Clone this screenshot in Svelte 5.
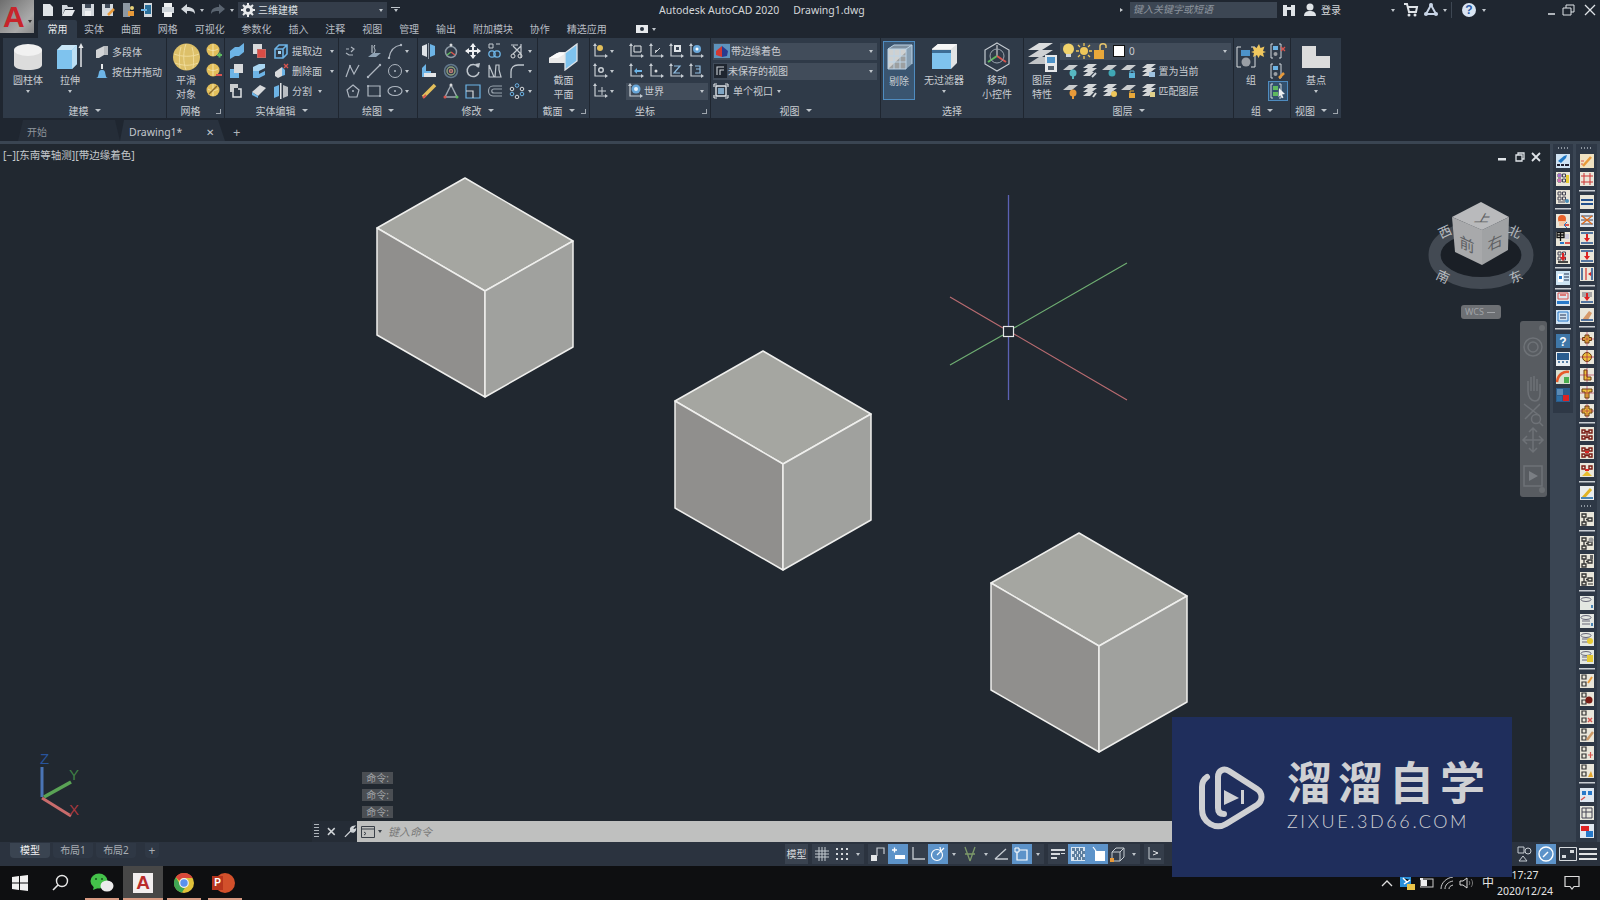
<script>
  const sv = (w, h, b) => `<svg width="${w}" height="${h}" viewBox="0 0 ${w} ${h}" style="display:block">${b}</svg>`;
  const st = (d, c = '#aeb6c0', w = 1) => `<path d="${d}" fill="none" stroke="${c}" stroke-width="${w}"/>`;
  const fl = (d, c) => `<path d="${d}" fill="${c}"/>`;
  const rc = (x, y, w, h, c) => `<rect x="${x}" y="${y}" width="${w}" height="${h}" fill="${c}"/>`;
  const ci = (x, y, r, c) => `<circle cx="${x}" cy="${y}" r="${r}" fill="${c}"/>`;
  const ro = (x, y, r, c = '#aeb6c0', w = 1) => `<circle cx="${x}" cy="${y}" r="${r}" fill="none" stroke="${c}" stroke-width="${w}"/>`;
  const B = '#6db4e6', BL = '#a9d6f2', G = '#d8dadc', Y = '#e3bf5b', R = '#d8554f', N = '#5fb85f', L = '#aeb6c0', O = '#e89a3a';
  const s16 = (b) => sv(16, 16, b);

  const q = {
    file: s16(fl('M3 2h7l3 3v9H3z', '#dfe3e7')),
    open: s16(fl('M2 3h5l1 2h5v2H5l-3 7z', '#cfd5db') + fl('M5 8h10l-3 6H2z', '#e6e9ec')),
    save: s16(rc(2, 2, 12, 12, '#d4d9de') + rc(5, 2, 6, 4, '#414c5a') + rc(5, 9, 6, 5, '#eef0f2')),
    saveas: s16(rc(2, 2, 11, 12, '#d4d9de') + rc(5, 2, 5, 4, '#414c5a') + st('M8 13l6-6', O, 2.5)),
    web: s16(rc(3, 1, 7, 14, '#8d98a3') + rc(8, 9, 6, 5, O) + ci(12, 6, 2, '#e8d17a')),
    mob: s16(rc(4, 1, 8, 14, '#d4d9de') + rc(5, 3, 6, 9, '#2a6f9a') + st('M1 8h6', B, 2)),
    plot: s16(rc(4, 1, 8, 4, '#eef0f2') + rc(2, 5, 12, 6, '#cfd5db') + rc(4, 10, 8, 5, '#f3f4f5')),
    undo: s16(fl('M1 7l6-5v3c5 0 8 2 8 7-2-3-4-3-8-3v3z', '#d4d9de')),
    redo: s16(fl('M15 7l-6-5v3c-5 0-8 2-8 7 2-3 4-3 8-3v3z', '#5a6470')),
    gear: s16(ro(8, 8, 3.6, '#e8eaec', 3) + st('M8 1v3M8 12v3M1 8h3M12 8h3M3 3l2 2M11 11l2 2M13 3l-2 2M5 11l-2 2', '#e8eaec', 2)),
    binoc: s16(rc(2, 3, 4, 11, '#dfe3e7') + rc(10, 3, 4, 11, '#dfe3e7') + rc(6, 5, 4, 3, '#dfe3e7')),
    user: s16(ci(8, 5, 3.5, '#dfe3e7') + fl('M2 14c0-4 3-5 6-5s6 1 6 5z', '#dfe3e7')),
    cart: s16(st('M1 2h3l2 8h7l1-5H5', '#dfe3e7', 2) + ci(6, 13, 1.5, '#dfe3e7') + ci(12, 13, 1.5, '#dfe3e7')),
    tri: s16(st('M8 3l5 9H3z', '#c8d4e6', 2) + ci(8, 3, 2, '#c8d4e6') + ci(3, 12, 2, '#c8d4e6') + ci(13, 12, 2, '#c8d4e6')),
    cam: s16(rc(2, 4, 12, 8, '#e6e9ec') + ci(8, 8, 2, '#2a3340'))
  };

  const cyl = sv(30, 28, fl('M1 7v15c0 3 6 5 14 5s14-2 14-5V7z', '#dcdcdc') + `<ellipse cx="15" cy="7" rx="14" ry="6" fill="#f1f1f1"/>`);
  const ext = sv(28, 28, fl('M1 7l5-5h15v19l-5 5H1z', '#7fc3ee') + fl('M1 7l5-5h15l-5 5z', '#c9e6f7') + fl('M16 7l5-5v19l-5 5z', '#bcdff4') + st('M25 24V3', '#e4e6e8', 1.5) + fl('M25 0l2.5 5h-5z', '#e4e6e8'));
  const sphere = sv(29, 28, `<circle cx="14.5" cy="14" r="13.5" fill="#ddc069"/>` + st('M2 11c8 3 18 3 25 0M3 20c8 3 16 3 23 0M14 1c-3 8-3 18 0 26M9 4c-2 6-2 14-1 21M20 4c2 6 2 14 1 21', '#f0dc9a', 1));
  const sect = sv(30, 28, fl('M0 15l10-6h8v11H0z', '#e9e9e9') + fl('M0 15l8-5h9l-8 5z', '#fafafa') + fl('M16 10L28 1v17l-12 9z', '#7fc3ee') + st('M16 10L28 1v17l-12 9z', '#dfe3e7', 1.3));
  const culling = sv(28, 28, rc(3, 5, 18, 20, '#cfd1d1') + fl('M3 25L21 8v17z', '#9da0a1') + fl('M3 5l6-4h18l-6 4z', '#7d8f9f') + fl('M21 5l6-4v19l-6 5z', '#88a0b4') + st('M3 5h18v20H3zM3 12h18M3 18h18M9 5v20M15 5v20M21 5l6-4M3 5l6-4h18v19', '#bcd3e6', 1));
  const nofilter = sv(28, 28, fl('M2 6l6-5h19v19l-6 6H2z', '#e1e3e4') + fl('M2 6l6-5h19l-6 5z', '#f6f6f6') + rc(2, 9, 19, 17, '#7fc3ee') + rc(2, 7, 19, 3, '#3d6d95'));
  const gizmo = sv(28, 30, st('M14 1L26 8v14l-12 7L2 22V8z', '#c4cad0', 1.2) + st('M14 3v11', '#8c9199', 2) + st('M14 14L5 20', N, 2) + st('M14 14l9 6', R, 2) + ro(14, 14, 7, '#9aa4ae', 1));
  const layerB = sv(30, 30, fl('M1 8L12 1h14L15 8z', '#dadcdd') + fl('M1 15L12 8h14L15 15z', '#cfd1d3') + fl('M1 22l11-7h6v7z', '#c1c4c7') + rc(18, 13, 12, 17, '#e6e8ea') + rc(20, 15, 8, 6, '#4d93c9') + rc(21, 24, 6, 4, '#52606e'));
  const group = sv(30, 26, st('M5 3H1v20h4M15 3h4v20h-4', '#d9dcdf', 1) + rc(5, 6, 9, 6, '#4d93c9') + ci(10, 18, 4.5, '#9a9fa5') + fl('M23 0l1.5 4 4-1.5L27 7l3 1-3 1 1 4-4-2-1.500 3-1.500-3-4 2 1-4-3-1 3-1-1.500-4.500 4 1.500z', '#f0c75e'));
  const base = sv(28, 22, fl('M0 0h14v10h14v12H0z', '#dcdcdc'));
  const poly = s16(fl('M2 6l8-4v9l-5 3H2z', '#d2d4d6') + fl('M10 2h4v9h-4z', '#b8bbbe'));
  const press = s16(fl('M1 14c3 0 3-1 4-6 1-3 5-3 6 0 1 5 1 6 4 6z', B) + rc(7, 0, 2, 5, '#e6e8ea'));
  const meshp = (x) => s16(ci(7, 7, 6.5, Y) + st('M2 6c3 2 7 2 10 0M7 1v12', '#f2e2a8') + x);
  const un = s16(fl('M1 8l5-4h4l5-4v9l-5 4H6l-5 3z', B));
  const sub = s16(rc(2, 1, 9, 10, G) + rc(6, 6, 9, 9, '#c66b66') + rc(7, 7, 7, 7, '#d94c46'));
  const wire = s16(st('M2 6l4-4h8v9l-4 4H2zM2 6h8v9M10 6l4-4', B, 1.6) + rc(5, 8, 3, 3, BL));
  const inter = s16(rc(1, 6, 9, 9, B) + rc(5, 1, 9, 9, G));
  const slab = s16(fl('M2 4l6-3h6v4l-6 3H2z', BL) + fl('M2 8h6v3l6-3v4l-6 3H2z', B));
  const delf = s16(fl('M2 9l7-5v9l-4 2-3-2z', G) + fl('M9 4l3 3v5l-3 1z', B) + st('M11 1l4 4M15 1l-4 4', R, 1.4));
  const box = s16(st('M4 6h8v8H4z', '#e0e2e4', 1.5) + rc(1, 1, 8, 8, '#c9ccce') + rc(5, 5, 4, 4, '#303a46'));
  const slp = s16(fl('M1 9l8-7 6 3-8 8z', G) + fl('M1 9l6 4v2l-6-3z', B));
  const split = s16(fl('M1 4l5-2v11l-5 2z', B) + rc(7, 0, 1.500, 16, '#e0e2e4') + fl('M10 2l5 2v9l-5 2z', '#b9bec3'));
  const d = (p, extra = '') => s16(st(p, L, 1.2) + extra);
  const line1 = d('M1 6h3M6 4l3 2-3 3M1 10l3 2h4', ci(12, 7, 0, L));
  const helix = s16(fl('M2 14l5-4h8l-5 4z', '#8fa3b5') + st('M6 2v8M9 2c-3 3 2 4-1 8', '#c9d1d9'));
  const arcI = d('M2 15C3 8 7 3 14 2', ci(2, 15, 1.200, L) + ci(14, 2, 1.200, L));
  const pline = d('M1 14l4-11 4 8 5-9', ci(5, 3, 1, L));
  const lineI = d('M2 14L14 2', ci(2, 14, 1.200, L) + ci(14, 2, 1.200, L));
  const circ = d('', ro(8, 8, 6.500) + ci(8, 8, 1, L));
  const pent = d('M8 2l6 5-2 7H4L2 7z', ci(8, 8, 1, L));
  const rect = d('M2 3h12v10H2z', ci(2, 3, 1, L) + ci(14, 13, 1, L));
  const ell = s16(`<ellipse cx="8" cy="8" rx="7" ry="4.500" fill="none" stroke="${L}" stroke-width="1.200"/>` + ci(8, 8, 1, L));
  const mir = s16(fl('M1 3l5-2v13l-5-2z', '#dfe3e7') + fl('M9 1l5 2v9l-5 2z', B) + rc(7, 0, 1, 16, '#8b95a0'));
  const rot3 = s16(ro(8, 9, 5.500, '#8e9aa6', 1.500) + st('M8 9L4 12', N, 1.500) + st('M8 9l4 3', R, 1.500) + ci(8, 2, 1.500, G));
  const mov = s16(st('M8 1v14M1 8h14', '#eef0f2', 2) + fl('M8 0l3 4H5zM8 16l3-4H5zM0 8l4-3v6zM16 8l-4-3v6z', '#eef0f2'));
  const arr = s16(st('M2 1h4v4H2zM9 1h4', '#c4cad0') + ro(5, 11, 3.200, B, 1.300) + ro(10, 11, 3.200, B, 1.300));
  const scis = s16(st('M2 2h7M12 1v14M4 3l8 8M12 3l-8 8', '#c4cad0', 1.200) + ro(4, 13, 2, G) + ro(11, 13, 2, G));
  const strch = s16(fl('M1 14V5l4-4v7h5v6z', B) + rc(3, 10, 12, 4, '#e3e5e7'));
  const array = s16(ro(8, 8, 6.500, '#62798d', 1.500) + ro(8, 8, 4, '#8a9e7c', 1.500) + ro(8, 8, 1.500, '#c07a74', 1.500));
  const rot = s16(st('M13 4a6 6 0 1 0 1 5', '#bfc6cd', 1.500) + fl('M10 1l4 4 1-5z', '#bfc6cd'));
  const scale = s16(st('M2 2v12h5zM9 2h3v5l2 7H8z', '#bfc6cd', 1.200));
  const fil = s16(st('M2 15V9c0-5 3-7 7-7h6', '#bfc6cd', 1.300));
  const erase = s16(st('M2 14L14 2', Y, 3.500) + st('M2 15l3-3', R, 2));
  const cpy = s16(st('M8 2L2 14h12z', '#9aa4ae', 1.500) + ci(8, 2, 1.500, G) + ci(2, 14, 1.500, R) + ci(14, 14, 1.500, N));
  const sq = s16(st('M1 2h14v13H1z', B, 1.200) + st('M1 8h7v7', G, 1.200));
  const off = s16(st('M15 3H6c-6 0-6 10 0 10h9M15 6H7c-3 0-3 4 0 4h8', '#9aa4ae', 1.200));
  const rarr = s16(ro(8, 2.500, 1.800, B, 1) + ro(13, 6, 1.800, G, 1) + ro(3, 6, 1.800, G, 1) + ro(13, 11, 1.800, B, 1) + ro(3, 11, 1.800, B, 1) + ro(8, 14, 1.800, G, 1));
  const ucsBase = (x) => s16(st('M3 2v11h11', '#c8ced4', 1.200) + fl('M3 0l2 3H1zM16 13l-3 2v-4z', '#c8ced4') + x);
  const ucs = {
    u1: ucsBase(ci(8, 5, 3, Y)),
    u2: ucsBase(st('M6 3h7v6H6z', '#e6e8ea')),
    u3: ucsBase(st('M7 10l5-5', '#c8ced4') + ci(8, 8, 1, G)),
    u4: ucsBase(rc(6, 2, 7, 7, '#dfe3e7') + rc(8, 4, 3, 3, '#3b4553')),
    u5: ucsBase(ci(9, 6, 4, '#68a6d8') + ci(9, 6, 1.500, '#fff')),
    u6: ucsBase(ci(9, 7, 3, '#c8ced4') + ci(9, 7, 1.500, '#2f3a48')),
    u7: ucsBase(fl('M7 7h7v2H7z', B) + fl('M6 8l3-3v6z', B)),
    u8: ucsBase(ci(8, 8, 1.500, G)),
    u10: ucsBase(st('M6 3h6L6 10h6', '#8fbce0', 1.200)),
    u11: ucsBase(st('M7 3h5v3H8h4v4H7', '#8fbce0', 1.200)),
    u12: ucsBase(st('M6 8h8M10 4v8', '#c8ced4')),
    world: ucsBase(ci(9, 6, 4.500, '#68a6d8') + ci(9, 6, 2, '#e8f2fa'))
  };
  const vstyle = sv(16, 14, rc(0, 0, 16, 14, '#5e93bd') + fl('M2 7l6-5v11l-6-2z', '#d43831') + fl('M8 2l6 5-1 5-5 1z', '#2a3b8e'));
  const vport = sv(16, 16, st('M3 3h10v10H3z', '#dfe3e7', 1.400) + rc(5, 5, 6, 6, '#7ea5c4') + st('M1 1h3M1 1v3M15 1h-3M15 1v3M1 15h3M1 15v-3M15 15h-3M15 15v-3', '#dfe3e7', 1.200));
  const sview = sv(13, 14, rc(0, 0, 13, 14, '#1f2630') + st('M3 11V3h7M6 11V6h4', '#c9ced4', 1.100));
  const bulb = sv(13, 16, ci(6.500, 6, 5.500, '#f2d36b') + rc(4, 11, 5, 3, '#cfd5db'));
  const sun = sv(16, 16, ci(8, 8, 4, '#eec65a') + st('M8 0v3M8 13v3M0 8h3M13 8h3M2 2l2 2M12 12l2 2M14 2l-2 2M4 12l-2 2', '#eec65a', 1.300));
  const lock = sv(14, 16, rc(1, 7, 10, 9, '#e9a83a') + st('M7 7V3c0-3 6-3 6 0v2', '#e6c46c', 1.500));
  const lay = (x) => s16(fl('M0 7l6-5h9l-6 5z', '#c9ccce') + x);
  const stk = (x) => s16(fl('M1 5l5-4h9l-5 4zM1 9l5-4h9l-5 4zM1 13l5-4h6l-4 4z', '#d3d6d8') + x);
  const layers = {
    a: lay(ci(10, 10, 3.500, '#57b7c1') + rc(9, 13, 2, 3, '#57b7c1')),
    b: stk(st('M10 14l4-4', '#cfd5db', 2)),
    c: lay(ci(10, 10, 3.500, '#3fa7b5') + rc(8, 8, 4, 4, '#3fa7b5')),
    d: lay(rc(8, 10, 6, 5, '#5db4d9') + st('M9 10V8h4v2', '#5db4d9')),
    e: stk(rc(8, 9, 6, 5, '#9fc2e0')),
    f: lay(ci(10, 10, 3.500, O) + rc(9, 13, 2, 3, O)),
    g: stk(st('M11 14l3-4', G, 2)),
    h: stk(ci(12, 11, 3, '#eec65a')),
    i: lay(rc(8, 10, 6, 5, '#e9a83a') + st('M9 10V8h4', '#e9a83a')),
    j: stk(rc(9, 9, 5, 5, '#e0d08a'))
  };
  const gs1 = s16(st('M3 1H1v14h2M9 1h2v14H9', '#cfd5db') + rc(3, 3, 5, 4, B) + ci(5.500, 11, 2, '#9a9fa5') + st('M11 4l4 4M15 4l-4 4', R, 1.300));
  const gs2 = s16(st('M3 1H1v14h2M9 1h2v14H9', '#cfd5db') + rc(3, 3, 5, 4, B) + ci(5.500, 11, 2, '#9a9fa5') + st('M9 15l5-5', O, 2.500));
  const gs3 = s16(st('M3 1H1v14h2M9 1h2v14H9', '#cfd5db') + rc(3, 3, 5, 4, N) + rc(3, 9, 5, 4, N) + fl('M9 5l6 6-3 .5 1.500 3-1.500 .8-1.500-3-2 2z', '#eef0f2'));

  const C = '#e9e6da';
  const a = (b, bg = C) => sv(14, 14, rc(0, 0, 14, 14, bg) + b);
  const ln = (p, c = '#223', w = 1) => st(p, c, w);
  const gr = (x) => a(ln('M2 2h3v3H2zM6.500 2h3v3h-3zM2 7h3v3H2zM6.500 7h3v3h-3z', '#445', 1) + x);
  const hl = (x) => a(ln('M1 2h12', '#23508c', 1.500) + ln('M1 12h12', '#23508c', 1.500) + x);
  const redarrow = fl('M7 11L4 7h2V3h2v4h2z', '#d22');
  const yp = (p) => a(fl(p, '#edc23b') + ln(p, '#6b3b10', 1) + ln('M7 0v14M0 7h14', '#a24', .6));
  const nd = (x) => a(ln('M2 3h3v3H2zM9 3h3v3H9zM2 9h3v3H2zM9 9h3v3H9zM5 4.500h4M5 10.500h4M7 4.500v6', '#7a1c14', 1.400) + x);
  const tr = (x) => a(ln('M2 2h4v3H2zM8 6h4v3H8zM2 10h4v3H2zM4 5v5M6 7.500h2', '#333', 1.300) + x);
  const rg = (x) => a(`<ellipse cx="6" cy="3.500" rx="5" ry="2" fill="none" stroke="#667" stroke-width="1"/>` + x, '#e3e7e2');
  const pr = (x) => a(ln('M2 1h4v4H2zM2 8h4v4H2z', '#333', 1.200) + x);
  const grip = { g: 1 };
  const dv = { d: 6 }, dt = { d: 3 }, d5 = { d: 5 };
  const col1 = [grip,
    a(fl('M2 7L8 2l3-1-1 3-5 5z', '#1f77c4') + ln('M1 11h3M5 11h3M9 11h4', '#223', 2), '#cfe2f2'),
    gr(rc(10, 3, 3, 8, '#e6c933') + rc(2, 2, 3, 3, '#a36cc9') + rc(2, 7, 3, 3, '#d36cb0')),
    gr(ci(11, 11, 2, '#4a8db5') + ln('M2 12h7', '#445')),
    dv,
    a(ci(6, 5, 4, '#e8622a') + fl('M3 7h6v5H3z', '#f3c9a8') + st('M8 11h5', R, 2) + st('M11 8l-3 3 3 3', '#2779c9')),
    a(ln('M1 3h7M4.500 0v9M1 0.500h7v5H1z', '#111', 1.300) + rc(9, 2, 4, 5, '#ccd') + st('M9 11h5', R, 2) + st('M4 11h4', '#2779c9', 2)),
    gr(redarrow + ln('M2 12h10', '#111', 1.500)),
    dt,
    a(rc(2, 3, 5, 8, '#fff') + ln('M8 3h5M8 6h5M8 9h5', '#235', 1.200) + rc(3, 5, 3, 3, '#2779c9'), '#cde4f3'),
    dt,
    a(ln('M2 1h10v6H2z', R, 1) + ln('M4 3h6', R, 1.500) + rc(1, 9, 12, 3, '#2779c9'), '#dce6ee'),
    a(ln('M2 2h10v9H2z', '#2779c9', 1) + ln('M4 5h6M4 8h6', '#235', 1.200), '#cfe2f2'),
    dv,
    a(`<text x="7" y="11.500" text-anchor="middle" font-family="Liberation Sans" font-weight="700" font-size="12" fill="#fff">?</text>`, '#3f77a8'),
    a(rc(1, 1, 12, 7, '#2a5d90') + ln('M2 10h2M6 10h2M10 10h2', '#2a5d90', 1.500), '#e9eef2'),
    a(st('M1 12C2 4 8 1 13 2', '#e85a2a', 2.500) + rc(8, 7, 5, 6, '#4bae50'), '#d8dfd0'),
    a(rc(1, 1, 6, 6, '#5a8ab5') + rc(7, 7, 6, 6, '#d22') + rc(1, 8, 5, 5, '#2f6fa5'), '#2b5d8d')
  ];
  const penc = a(st('M3 12l8-9', O, 2.500) + ln('M1 7h3M1 10h2', R), '#efe2c2');
  const col2 = [grip,
    penc,
    a(ln('M4 1v12M10 1v12M1 4h12M1 10h12', '#c33', 1)),
    d5,
    a(ln('M1 5h12M1 9h12', '#23508c', 1.800)),
    a(ln('M1 3h12M1 7h12M1 11h12', '#445', 1) + st('M2 3l10 8M12 3L2 11', '#e06a1a', 1.400), '#dfe6ee'),
    hl(redarrow), hl(redarrow),
    a(ln('M2 1v12M12 1v12', '#23508c', 1.500) + ln('M6 1v12', R, 1.500) + fl('M8 7l3-2v4z', '#d22')),
    d5,
    a(rc(2, 2, 10, 5, '#a5a5a5') + redarrow + ln('M1 12h12', '#23508c', 1.500)),
    a(fl('M2 12L9 3l3 2-4 7z', '#d79a6a') + ln('M1 12h12', '#23508c', 1.500)),
    dv,
    yp('M5 3h4v2.500h2.500v3H9V11H5V8.500H2.500v-3H5z'),
    a(`<circle cx="7" cy="7" r="4.500" fill="#edc23b" stroke="#6b3b10"/>` + ln('M7 0v14M0 7h14', '#a24', .7)),
    yp('M4 2h3v7h4v3H4z'),
    yp('M2 3h10v3H9v6H5V6H2z'),
    yp('M5 2h4v3h3v4H9v3H5V9H2V5h3z'),
    d5,
    nd(''), nd(rc(5, 6, 4, 2, '#d22')), a(ln('M2 3h3v3H2zM9 3h3v3H9z', '#7a1c14', 1.400) + fl('M2 13l5-5 5 5z', '#e9bd2d') + rc(5, 6, 4, 2, '#d22')),
    d5,
    a(st('M3 12l8-9', '#e0b324', 3) + rc(1, 11, 12, 2, '#4a85b5'), '#e9ecec'),
    { g: 1 },
    tr(''),
    dv,
    tr(ci(11, 4, 2.500, '#999')), tr(rc(10, 1, 3, 4, '#666')), tr(ln('M8 12h5', '#333')),
    dv,
    rg(rc(11, 9, 2, 3, '#4a85b5')), rg(ln('M2 7h8M2 10h8', '#667') + rc(11, 9, 2, 3, '#4a85b5')),
    rg(ln('M2 7h8M2 10h8', '#667') + ci(10, 9, 3, '#e6c933')), rg(ln('M2 7h5M2 10h5', '#667') + rc(7, 5, 6, 7, '#e6c933')),
    dv,
    pr(st('M8 9l4-6', O, 2)), pr(ci(9, 8, 3.500, '#7a1c14')), pr(ln('M8 8l4 4M12 8l-4 4', R, 1.500)),
    pr(st('M7 12l6-8', '#cc9966', 2.500)), pr(ln('M8 9h5M10.500 6v6', R, 1.200)), pr(fl('M8 13l3-6 2 6z', '#e3a62c')),
    dv,
    a(rc(2, 3, 4, 4, '#2779c9') + rc(8, 3, 4, 4, '#2779c9') + st('M1 12l4-3', R, 1.500), '#dfe8f1'),
    a(ln('M2 2h10v10H2zM2 6h10M6 2v10', '#445', 1), '#e5e6dc'),
    a(rc(1, 2, 8, 5, '#d22') + rc(6, 7, 7, 6, '#2779c9'), '#dfe8f1')
  ];
  const st0 = (p, c = '#c6ccd2', w = 1.300) => s16(st(p, c, w));
  const sb = {
    grid: st0('M1 5h14M1 8h14M1 11h14M5 1v14M8 1v14M11 1v14', '#c6ccd2', 1),
    dots: s16(['3,3','8,3','13,3','3,8','8,8','13,8','3,13','8,13','13,13'].map((p) => { const [x, y] = p.split(','); return rc(+x - 1, +y - 1, 2, 2, '#d4d8dc'); }).join('')),
    snap: s16(rc(1, 9, 6, 6, '#e6e8ea') + st('M7 10V2h7v6', '#c6ccd2', 1.200)),
    dyn: s16(st('M2 4h5M4.500 1.500v5', '#fff', 1.300) + rc(5, 9, 10, 4, '#fff')),
    ortho: st0('M3 1v12h12'),
    polar: s16(ro(7, 9, 5.500, '#fff', 1.200) + st('M7 9l7-7M10 1l1 5', '#fff', 1.200)),
    iso: s16(st('M3 1l5 14M13 1L8 15M3 8h10', '#7d9a6a', 1.300)),
    ang: st0('M1 13h13M1 13L12 3'),
    osn: s16(st('M3 4h10v10H3z', '#fff', 1.200) + rc(1, 2, 4, 4, '#5d93c9') + st('M1 2h4v4H1z', '#fff')),
    lw: s16(rc(1, 3, 14, 2, '#d6dade') + rc(1, 7, 9, 2, '#d6dade') + rc(1, 11, 6, 2, '#d6dade') + rc(11, 7, 4, 1, '#d6dade')),
    tr: s16(rc(1, 1, 14, 14, '#d9e5f0') + ['2,2','6,2','10,2','4,5','8,5','12,5','2,8','6,8','10,8','4,11','8,11','12,11'].map((p) => { const [x, y] = p.split(','); return rc(+x, +y, 3, 3, '#5d7f9f'); }).join('')),
    qs: s16(st('M3 1l3 4', '#fff', 1.200) + rc(5, 5, 10, 10, '#fff')),
    cube: s16(st('M2 6l4-4h8v9l-4 4H2zM2 6h8v9M10 6l4-4', '#c6ccd2') + rc(0, 12, 4, 4, O)),
    ucs: s16(st('M3 1v12h12', '#c6ccd2') + st('M7 5l5 2-5 2', '#e6e8ea')),
    shp: s16(st('M2 1h6v6H2z', '#c6ccd2') + ro(12, 5, 3, '#c6ccd2') + st('M7 10l4 5H3z', '#c6ccd2')),
    gauge: s16(ro(8, 8, 7, '#fff', 1.400) + st('M5 11l5-5', '#fff', 1.400)),
    full: sv(18, 14, st('M.500 .500h17v13H.500z', '#d6dade') + rc(11, 3, 4, 3, '#d6dade') + rc(3, 8, 4, 3, '#d6dade')),
    menu: sv(18, 14, rc(0, 1, 18, 2, '#e1e3e5') + rc(0, 6, 18, 2, '#e1e3e5') + rc(0, 11, 18, 2, '#e1e3e5'))
  };
  const tabs = ['实体', '曲面', '网格', '可视化', '参数化', '插入', '注释', '视图', '管理', '输出', '附加模块', '协作', '精选应用'];
</script>

{#snippet t(svg)}<span class="t">{@html svg}</span>{/snippet}
{#snippet ubs(list)}{#each list as k}{@render t(ucs[k])}{/each}{/snippet}
{#snippet big(svg, l1, l2, arrow)}
  <div class="big">
    <span class="bigic">{@html svg}</span>
    <span class="bl">{l1}</span>
    {#if l2}<span class="bl">{l2}</span>{/if}
    {#if arrow}<b class="ar bar"></b>{/if}
  </div>
{/snippet}
{#snippet label(txt, corner, noar)}
  <div class="plabel" class:hasc={corner}><span>{txt}</span>{#if !noar}<b class="ar lar"></b>{/if}{#if corner}<i class="corner"></i>{/if}</div>
{/snippet}
{#snippet dock(list, cls)}
  <div class="dcol {cls}">
    {#each list as it}
      {#if it.g}<span class="grip"></span>
      {:else if it.d}<span class="dv" class:d3={it.d === 3} class:d5={it.d === 5}></span>
      {:else}<span class="di">{@html it}</span>{/if}
    {/each}
  </div>
{/snippet}

<div class="app">
  <header class="head">
    <div class="logo"><span class="logoA">A</span><b class="ar logoar"></b></div>
    <div class="headR">
      <div class="titlebar">
        {@render t(q.file)}{@render t(q.open)}{@render t(q.save)}{@render t(q.saveas)}{@render t(q.web)}{@render t(q.mob)}{@render t(q.plot)}{@render t(q.undo)}<b class="ar sm"></b>{@render t(q.redo)}<b class="ar sm"></b>
        <div class="ws"><span class="wsic">{@html q.gear}</span><span>三维建模</span><b class="ar wsar"></b></div>
        <span class="ovr"><b class="ar"></b></span>
        <div class="title"><span>Autodesk AutoCAD 2020</span><span>Drawing1.dwg</span></div>
        <b class="ar rt"></b>
        <div class="search">键入关键字或短语</div>
        {@render t(q.binoc)}{@render t(q.user)}<span class="login">登录</span>
        <b class="ar la"></b>
        {@render t(q.cart)}{@render t(q.tri)}<b class="ar sm"></b><span class="vs"></span>
        <span class="help">?</span><b class="ar hm"></b>
        <div class="win">
          <svg width="14" height="12" viewBox="0 0 14 12"><path d="M7 10h7" stroke="#dfe3e7" stroke-width="1.500"/></svg>
          <svg width="14" height="12" viewBox="0 0 14 12"><path d="M1 4h8v7H1zM4 4V1h8v7H9" fill="none" stroke="#dfe3e7"/></svg>
          <svg width="14" height="12" viewBox="0 0 14 12"><path d="M2 1l10 10M12 1L2 11" stroke="#dfe3e7" stroke-width="1.300"/></svg>
        </div>
      </div>
      <nav class="tabs">
        <span class="tab on">常用</span>
        {#each tabs as x}<span class="tab">{x}</span>{/each}
        <span class="camera">{@html q.cam}<b class="ar sm"></b></span>
      </nav>
    </div>
  </header>

  <section class="ribbon">
    <div class="panel p1">
      <div class="body">
        <div class="w50">{@render big(cyl, '圆柱体', '', true)}</div>
        <div class="w34">{@render big(ext, '拉伸', '', true)}</div>
        <div class="rows m7">
          <div class="r"><span class="t15">{@html poly}</span><span class="tx">多段体</span></div>
          <div class="r"><span class="t15">{@html press}</span><span class="tx">按住并拖动</span></div>
        </div>
      </div>
      {@render label('建模')}
    </div>
    <div class="panel p2">
      <div class="body">
        <div class="w38">{@render big(sphere, '平滑', '对象')}</div>
        <div class="rows">
          {@render t(meshp(st('M11 12h5M13.500 9.500v5', N, 2)))}
          {@render t(meshp(st('M10 12h6', R, 2)))}
          {@render t(meshp(st('M3 11l8-8', '#8a6a2c', 1.500)))}
        </div>
      </div>
      {@render label('网格', true, true)}
    </div>
    <div class="panel p3">
      <div class="rows pad">
        <div class="r c22">{@render t(un)}{@render t(sub)}{@render t(wire)}<span class="tx">提取边</span><b class="ar m8"></b></div>
        <div class="r c22">{@render t(inter)}{@render t(slab)}{@render t(delf)}<span class="tx">删除面</span><b class="ar m8"></b></div>
        <div class="r c22">{@render t(box)}{@render t(slp)}{@render t(split)}<span class="tx">分割</span><b class="ar m6"></b></div>
      </div>
      {@render label('实体编辑')}
    </div>
    <div class="panel p4">
      <div class="rows pad">
        <div class="r c21">{@render t(line1)}{@render t(helix)}{@render t(arcI)}<b class="ar"></b></div>
        <div class="r c21">{@render t(pline)}{@render t(lineI)}{@render t(circ)}<b class="ar"></b></div>
        <div class="r c21">{@render t(pent)}{@render t(rect)}{@render t(ell)}<b class="ar"></b></div>
      </div>
      {@render label('绘图')}
    </div>
    <div class="panel p5">
      <div class="rows pad">
        <div class="r c22">{@render t(mir)}{@render t(rot3)}{@render t(mov)}{@render t(arr)}{@render t(scis)}<b class="ar"></b></div>
        <div class="r c22">{@render t(strch)}{@render t(array)}{@render t(rot)}{@render t(scale)}{@render t(fil)}<b class="ar"></b></div>
        <div class="r c22">{@render t(erase)}{@render t(cpy)}{@render t(sq)}{@render t(off)}{@render t(rarr)}<b class="ar"></b></div>
      </div>
      {@render label('修改')}
    </div>
    <div class="panel p6">
      <div class="body">
        <div class="wfull">{@render big(sect, '截面', '平面')}</div>
      </div>
      {@render label('截面', true)}
    </div>
    <div class="panel p7">
      <div class="rows pad">
        <div class="r c20">{@render t(ucs.u1)}<b class="ar"></b><span class="sp8"></span>{@render ubs(['u2', 'u3', 'u4', 'u5'])}</div>
        <div class="r c20">{@render t(ucs.u6)}<b class="ar"></b><span class="sp8"></span>{@render ubs(['u7', 'u8', 'u10', 'u11'])}</div>
        <div class="r c20">{@render t(ucs.u12)}<b class="ar"></b><span class="sp8"></span><div class="dd dd7">{@render t(ucs.world)}<span>世界</span><b class="ar ddar"></b></div></div>
      </div>
      {@render label('坐标', true, true)}
    </div>
    <div class="panel p8">
      <div class="rows pad">
        <div class="r"><div class="dd dd8"><span class="ddi">{@html vstyle}</span><span>带边缘着色</span><b class="ar ddar"></b></div></div>
        <div class="r"><div class="dd dd8"><span class="ddi">{@html sview}</span><span>未保存的视图</span><b class="ar ddar"></b></div></div>
        <div class="r vp"><span class="t20">{@html vport}</span><span class="tx">单个视口</span><b class="ar m4"></b></div>
      </div>
      {@render label('视图')}
    </div>
    <div class="panel p9">
      <div class="body">
        <div class="active">{@render big(culling, '剔除')}</div>
        <div class="w48">{@render big(nofilter, '无过滤器', '', true)}</div>
        <div class="w52">{@render big(gizmo, '移动', '小控件')}</div>
      </div>
      <div class="plabel"><span>选择</span></div>
    </div>
    <div class="panel p10">
      <div class="body">
        <div class="w36">{@render big(layerB, '图层', '特性')}</div>
        <div class="rows">
          <div class="r"><div class="dd dd10"><span class="ddl">{@html bulb}</span><span class="ddl">{@html sun}</span><span class="ddl">{@html lock}</span><span class="swatch"></span><span class="zero">0</span><b class="ar ddar"></b></div></div>
          <div class="r c20">{@render t(layers.a)}{@render t(layers.b)}{@render t(layers.c)}{@render t(layers.d)}{@render t(layers.e)}<span class="tx">置为当前</span></div>
          <div class="r c20">{@render t(layers.f)}{@render t(layers.g)}{@render t(layers.h)}{@render t(layers.i)}{@render t(layers.j)}<span class="tx">匹配图层</span></div>
        </div>
      </div>
      {@render label('图层')}
    </div>
    <div class="panel p11">
      <div class="body">
        <div class="w34">{@render big(group, '组')}</div>
        <div class="rows">
          {@render t(gs1)}{@render t(gs2)}<span class="t ton">{@html gs3}</span>
        </div>
      </div>
      {@render label('组')}
    </div>
    <div class="panel p12">
      <div class="body">
        <div class="wfull">{@render big(base, '基点', '', true)}</div>
      </div>
      {@render label('视图', true)}
    </div>
  </section>

  <div class="docs">
    <span class="doc">开始</span>
    <span class="doc cur">Drawing1*<i class="x">✕</i></span>
    <span class="plus">+</span>
  </div>
  <div class="strip"></div>

  <main class="main">
    <div class="canvas">
      <svg class="scene" width="1550" height="698" viewBox="0 144 1550 698">
        {#each [[0, 0], [298, 173], [614, 355]] as [dx, dy]}
          <g transform="translate({dx} {dy})" stroke="#efefed" stroke-width="1.500" stroke-linejoin="round">
            <path d="M465 178L573 241L485 291L377 228Z" fill="#a5a6a1" />
            <path d="M377 228L485 291V397L377 335Z" fill="#908f8d" />
            <path d="M485 291L573 241V347L485 397Z" fill="#a0a19e" />
          </g>
        {/each}
        <path d="M1008.500 195V326M1008.500 337V400" stroke="#5c62b4" stroke-width="1.300" />
        <path d="M950 365L1003 335M1014 328L1127 263" stroke="#6fae72" stroke-width="1.200" />
        <path d="M950 297L1003 328M1014 334L1127 400" stroke="#b86b70" stroke-width="1.200" />
        <rect x="1003.500" y="326.500" width="10" height="10" fill="none" stroke="#e4e6e8" stroke-width="1.200" />

        <ellipse cx="1481" cy="255" rx="40" ry="24" fill="#1a1f26" />
        <ellipse cx="1481" cy="255" rx="46.500" ry="28" fill="none" stroke="#434a53" stroke-width="12" />
        <path d="M1481 202L1509 217L1482 230L1452 217Z" fill="#b9babc" />
        <path d="M1452 217L1482 230V265L1455 252Z" fill="#a8a9ab" />
        <path d="M1482 230L1509 217L1508 250L1482 265Z" fill="#a0a2a4" />
        <text class="vc" transform="translate(1481 222) skewX(-30) scale(1 .7)" text-anchor="middle">上</text>
        <text class="vc" transform="translate(1467 250) skewY(25)" text-anchor="middle">前</text>
        <text class="vc" transform="translate(1495 248) skewY(-25)" text-anchor="middle">右</text>
        <text class="vd" transform="translate(1447 236) rotate(-25)" text-anchor="middle">西</text>
        <text class="vd" transform="translate(1513 236) rotate(25)" text-anchor="middle">北</text>
        <text class="vd" transform="translate(1441 281) rotate(25)" text-anchor="middle">南</text>
        <text class="vd" transform="translate(1518 281) rotate(-25)" text-anchor="middle">东</text>

        <path d="M42 797V767" stroke="#4a74b5" stroke-width="3" />
        <path d="M44 797L71 782" stroke="#5aa355" stroke-width="3.500" />
        <path d="M42 798L71 816" stroke="#c96c6c" stroke-width="3" />
        <text class="ax" x="40" y="764" fill="#28549c">Z</text>
        <text class="ax" x="69" y="780" fill="#3f7f45">Y</text>
        <text class="ax" x="69" y="815" fill="#a8383e">X</text>
      </svg>

      <div class="vlabel">[−][东南等轴测][带边缘着色]</div>
      <div class="vwin">
        <svg width="12" height="10" viewBox="0 0 12 10"><rect x="1" y="6" width="8" height="2.500" fill="#dfe3e7"/></svg>
        <svg width="10" height="10" viewBox="0 0 10 10"><path d="M1 3h6v6H1zM3 3V1h6v6H7" fill="none" stroke="#dfe3e7" stroke-width="1.300"/></svg>
        <svg width="10" height="10" viewBox="0 0 10 10"><path d="M1 1l8 8M9 1L1 9" stroke="#dfe3e7" stroke-width="1.800"/></svg>
      </div>
      <div class="wcs"><span>WCS</span><i></i></div>
      <div class="nav">
        <svg width="27" height="176" viewBox="0 0 27 176">
          <g fill="none" stroke="#6e7277" stroke-width="1.500">
            <circle cx="13" cy="26" r="9" /><circle cx="13" cy="26" r="5" />
            <path d="M8 70V60M11 70V56M14 70V55M17 70V58M20 72V63M8 70c0 6 3 10 7 10s5-3 5-8" />
            <circle cx="16" cy="98" r="4.500" /><path d="M4 83l16 12M20 83L5 98M19 101l4 4" />
            <path d="M13 107v24M3 119h20M9 111l4-4 4 4M9 127l4 4 4-4M7 115l-4 4 4 4M19 115l4 4-4 4" />
            <path d="M4 145h18v20H4z" />
          </g>
          <path d="M9 150l9 5-9 5z" fill="#7a7e83" />
          <circle cx="22" cy="7" r="3" fill="#6a6e72" /><circle cx="22" cy="169" r="3" fill="#6a6e72" />
        </svg>
      </div>
      <div class="hist">
        <span>命令:</span><span>命令:</span><span>命令:</span>
      </div>
      <div class="cmd">
        <div class="cmdl">
          <i class="gripv"></i>
          <svg width="11" height="11" viewBox="0 0 11 11"><path d="M2 2l7 7M9 2L2 9" stroke="#cfd3d7" stroke-width="1.500"/></svg>
          <svg width="14" height="14" viewBox="0 0 14 14"><path d="M2 12l6-6M8 6c-1-3 1-5 4-5l-2 2 1 2 2-1c0 3-3 4-5 2z" fill="#cfd3d7" stroke="#cfd3d7" stroke-width="1.300"/></svg>
        </div>
        <div class="cmdi">
          <svg width="14" height="12" viewBox="0 0 14 12"><path d="M.500 .500h13v11H.500zM.500 3h13M3 6l2 1.500L3 9" fill="none" stroke="#3a4048"/></svg>
          <b class="ar dk"></b>
          <span>键入命令</span>
        </div>
      </div>
    </div>
    <aside class="dockw">
      {@render dock(col1, 'dc1')}
      {@render dock(col2, 'dc2')}
    </aside>
  </main>

  <footer class="status">
    <div class="lt">
      <span class="lay on">模型</span><span class="lay">布局1</span><span class="lay">布局2</span><span class="lay pl">+</span>
    </div>
    <div class="sbm">
      <span class="mdl">模型</span>
      <span class="sg">
        <span class="s">{@html sb.grid}</span><span class="s">{@html sb.dots}</span><b class="ar"></b>
      </span>
      <span class="sg">
        <span class="s">{@html sb.snap}</span><span class="s on">{@html sb.dyn}</span><span class="s">{@html sb.ortho}</span><span class="s on">{@html sb.polar}</span><b class="ar"></b><span class="s">{@html sb.iso}</span><b class="ar"></b><span class="s">{@html sb.ang}</span><span class="s on">{@html sb.osn}</span><b class="ar"></b>
      </span>
      <span class="sg">
        <span class="s">{@html sb.lw}</span><span class="s on">{@html sb.tr}</span><span class="s on">{@html sb.qs}</span><span class="s">{@html sb.cube}</span><b class="ar"></b>
      </span>
      <span class="sg"><span class="s">{@html sb.ucs}</span></span>
    </div>
    <div class="sbr">
      <span class="s">{@html sb.shp}</span><span class="s on">{@html sb.gauge}</span><span class="s">{@html sb.full}</span><span class="s">{@html sb.menu}</span>
    </div>
  </footer>

  <footer class="task">
    <span class="tb win10">
      <svg width="20" height="20" viewBox="0 0 20 20"><path d="M2 4l7-1v6.500H2zM10 3l8-1v7.500h-8zM2 10.500h7V17l-7-1zM10 10.500h8V18l-8-1z" fill="#f0f0f0"/></svg>
    </span>
    <span class="tb">
      <svg width="18" height="18" viewBox="0 0 18 18"><circle cx="11" cy="7" r="5.500" fill="none" stroke="#e8e8e8" stroke-width="1.400"/><path d="M7 11l-5 5" stroke="#e8e8e8" stroke-width="1.600"/></svg>
    </span>
    <span class="tb app-ic first">
      <svg width="24" height="22" viewBox="0 0 24 22"><ellipse cx="9" cy="9" rx="8.500" ry="7.500" fill="#44c24a"/><path d="M4 14l-1 4 5-2z" fill="#44c24a"/><ellipse cx="17" cy="14" rx="6.500" ry="5.500" fill="#ececec"/><circle cx="6" cy="7" r="1" fill="#16511b"/><circle cx="12" cy="7" r="1" fill="#16511b"/></svg>
    </span>
    <span class="tb app-ic act"><span class="acad">A</span></span>
    <span class="tb app-ic">
      <svg width="20" height="20" viewBox="0 0 20 20"><circle cx="10" cy="10" r="10" fill="#e0c13a"/><path d="M10 0a10 10 0 0 1 8.700 5H10a5 5 0 0 0-4.500 2.800L1.800 4.200A10 10 0 0 1 10 0z" fill="#d9483b"/><path d="M1.800 4.200l4 6.800a5 5 0 0 0 5 4l-3 4.800A10 10 0 0 1 1.800 4.200z" fill="#3fa653"/><circle cx="10" cy="10" r="4.300" fill="#5a91ee" stroke="#eee" stroke-width="1.200"/></svg>
    </span>
    <span class="tb app-ic">
      <span class="ppt"><span class="pp">P</span></span>
    </span>
    <div class="tray">
      <svg width="14" height="10" viewBox="0 0 14 10"><path d="M2 8l5-5 5 5" fill="none" stroke="#dedede" stroke-width="1.300"/></svg>
      <svg width="16" height="16" viewBox="0 0 16 16"><rect x="1" y="1" width="11" height="11" fill="#2a8fd8"/><path d="M4 3l4 4 3-2M5 9l3-2" stroke="#fff" stroke-width="1.500"/><rect x="8" y="9" width="8" height="6" fill="#e9c44a"/></svg>
      <svg width="14" height="10" viewBox="0 0 14 10"><rect y="1" width="13" height="8" fill="none" stroke="#ccc"/><rect x="1" y="2" width="6" height="6" fill="#eee"/><rect y="0" width="3" height="2" fill="#eee"/></svg>
      <svg width="15" height="14" viewBox="0 0 15 14"><path d="M2 13c0-6 5-11 12-12M6 13c0-4 3-7 8-8M10 13c0-2 1-3 4-4" fill="none" stroke="#c8c8c8"/></svg>
      <svg width="14" height="14" viewBox="0 0 14 14"><path d="M1 5h3l4-3v10L4 9H1z" fill="none" stroke="#dedede"/><path d="M10 5c1 1 1 3 0 4M12 3c2 2 2 6 0 8" fill="none" stroke="#777"/></svg>
      <span class="zh">中</span>
    </div>
    <div class="clock"><span>17:27</span><span>2020/12/24</span></div>
    <span class="notif">
      <svg width="18" height="18" viewBox="0 0 18 18"><path d="M2 2.500h14v10h-5l-2 2.500-2-2.500H2z" fill="none" stroke="#dedede" stroke-width="1.200"/></svg>
    </span>
  </footer>

  <aside class="mark">
    <svg class="mlogo" width="70" height="70" viewBox="0 0 70 70">
      <path d="M26 49C21 49 20 46 20 43V12C20 5 26 3 31 6L59 24C65 28 65 36 59 40L28 59C18 65 4 58 4 44V22C4 18 6 14 9 12" fill="none" stroke="#cfd0d3" stroke-width="6" stroke-linecap="round" stroke-linejoin="round"/>
      <path d="M26 25l15 8-15 7z" fill="#cfd0d3"/><rect x="43" y="25" width="3" height="14" fill="#cfd0d3"/>
    </svg>
    <div class="mtxt">
      <div class="mcn">溜溜自学</div>
      <div class="men">ZIXUE.3D66.COM</div>
    </div>
  </aside>
</div>

<style>
  :global(body) { margin: 0; background: #212830; }
  .app {
    position: relative; width: 1600px; height: 900px; overflow: hidden;
    display: flex; flex-direction: column; background: #1f2630; color: #c9cdd2;
    font: 10px/14px "Noto Sans", "Noto Sans CJK SC", sans-serif;
  }
  .ar { display: inline-block; flex: none; width: 0; height: 0; border: 2.500px solid transparent; border-top: 3px solid #bfc5cb; border-bottom: 0; }
  .t { flex: none; width: 20px; height: 20px; display: flex; align-items: center; justify-content: center; }

  .head { display: flex; height: 38px; flex: none; }
  .logo { position: relative; width: 34px; height: 33px; background: linear-gradient(135deg, #6e6e6e, #aaa 70%, #888); display: flex; align-items: center; padding-left: 3px; box-sizing: border-box; overflow: hidden; }
  .logoA { font: bold 30px/33px "Liberation Sans", sans-serif; color: #c8242b; }
  .logoar { position: absolute; right: 2px; top: 20px; border-top-color: #333; }
  .headR { flex: 1; min-width: 0; display: flex; flex-direction: column; }
  .titlebar { height: 20px; display: flex; align-items: center; padding-left: 4px; }
  .sm { margin: 0 4px 0 2px; }
  .titlebar .t { width: 20px; }
  .ws { width: 149px; height: 16px; background: #343d4a; display: flex; align-items: center; font-size: 10px; color: #dde0e3; flex: none; }
  .wsic { margin: 0 2px 0 2px; display: flex; }
  .wsar { margin-left: auto; margin-right: 4px; }
  .ovr { margin-left: 4px; width: 9px; border-top: 1px solid #bfc5cb; display: flex; height: 4px; padding-top: 1px; justify-content: center; }
  .title { margin-left: 259px; width: 220px; display: flex; gap: 14px; font-size: 10.500px; color: #d4d7da; white-space: nowrap; flex: none; }
  .rt { border: 2.500px solid transparent; border-left: 3px solid #c5c9cd; border-right: 0; margin-left: 241px; }
  .search { width: 147px; height: 16px; margin-left: 7px; background: #3c4653; color: #8c949d; font-style: italic; line-height: 15px; padding-left: 3px; box-sizing: border-box; flex: none; }
  .titlebar .search + .t { margin-left: 2px; margin-right: 1px; }
  .login { margin-left: 1px; color: #d4d7da; }
  .la { margin-left: 50px; margin-right: 6px; }
  .vs { width: 1px; height: 16px; background: #3e4753; margin: 0 5px 0 0; }
  .help { width: 14px; height: 14px; border-radius: 50%; background: #d9e4f2; color: #2c5da8; font: bold 12px/14px "Liberation Sans", sans-serif; text-align: center; margin-left: 5px; flex: none; }
  .hm { margin-left: 6px; }
  .win { margin-left: auto; margin-right: 3px; display: flex; gap: 7px; }

  .tabs { flex: 1; display: flex; align-items: center; padding-left: 4px; color: #b7bcc3; }
  .tab { padding: 0 8px; height: 18px; line-height: 18px; white-space: nowrap; margin-right: .9px; }
  .tab.on { background: #2f3a48; width: 39px; padding: 0; text-align: center; box-sizing: border-box; color: #e8eaec; border-radius: 2px 2px 0 0; margin-right: -1px; }
  .camera { display: flex; align-items: center; margin-left: 18px; }

  .ribbon { flex: none; height: 80px; margin-bottom: 2px; padding-left: 3px; display: flex; gap: 1px; }
  .panel { display: flex; flex-direction: column; background: #2f3a48; height: 80px; }
  .p1 { width: 163px; } .p2 { width: 57px; } .p3 { width: 113px; } .p4 { width: 78px; } .p5 { width: 119px; }
  .p6 { width: 51px; } .p7 { width: 120px; } .p8 { width: 169px; } .p9 { width: 142px; } .p10 { width: 209px; }
  .p11 { width: 56px; } .p12 { width: 50px; }
  .body, .pad { height: 65px; flex: none; box-sizing: border-box; }
  .body { display: flex; padding-top: 3px; }
  .rows { display: flex; flex-direction: column; }
  .pad { padding-top: 3px; }
  .r { display: flex; align-items: center; height: 20px; white-space: nowrap; flex: none; }
  .c22 .t { width: 22px; }
  .c21 .t { width: 21px; }
  .c20 .t { width: 20px; }
  .p10 .c20 .t { width: 19.500px; }
  .p3 .pad { padding-left: 1px; } .p4 .pad { padding-left: 3px; } .p5 .pad { padding-left: 0; }
  .p7 .pad { padding-left: 0; } .p8 .pad { padding-left: 2px; }
  .tx { color: #c9cdd2; white-space: nowrap; }
  .m7 { margin-left: 7px; padding-top: 1px; }
  .m8 { margin-left: 8px; } .m6 { margin-left: 6px; } .m4 { margin-left: 4px; }
  .t15 { width: 18px; display: flex; flex: none; }
  .w50 { width: 50px; } .w34 { width: 34px; } .w38 { width: 38px; margin-left: 1px; } .wfull { width: 100%; }
  .w48 { width: 48px; margin-left: 5px; } .w52 { width: 52px; margin-left: 3px; } .w36 { width: 36px; }
  .big { display: flex; flex-direction: column; align-items: center; }
  .bigic { height: 28px; margin: 2px 0; display: flex; align-items: center; justify-content: center; }
  .bl { white-space: nowrap; height: 14px; }
  .bar { margin-top: 3px; }
  .plabel { position: relative; height: 15px; display: flex; align-items: center; justify-content: center; gap: 6px; color: #c9cdd2; }
  .plabel.hasc { padding-right: 10px; }
  .lar { border-width: 3px; border-top-width: 3.500px; border-bottom: 0; }
  .corner { position: absolute; right: 3px; top: 6px; width: 4px; height: 4px; border-right: 1px solid #a0a7af; border-bottom: 1px solid #a0a7af; }
  .sp8 { width: 12px; flex: none; }
  .dd { height: 17px; background: #414c5a; display: flex; align-items: center; box-sizing: border-box; flex: none; }
  .dd7 { width: 82px; } .dd8 { width: 164px; } .dd10 { width: 171px; padding-left: 2px; }
  .dd .t { width: 18px; }
  .ddi { display: flex; margin-right: 1px; padding-left: 1px; }
  .ddl { display: flex; margin-right: 1px; }
  .ddar { margin-left: auto; margin-right: 4px; }
  .vp { padding-left: 0; }
  .t20 { width: 20px; display: flex; flex: none; }
  .swatch { width: 10px; height: 10px; background: #fff; border: 1px solid #111; margin-left: 5px; }
  .zero { margin-left: 4px; }
  .p10 .c20 { padding-left: 1px; }
  .active { width: 32px; height: 59px; margin-left: 2px; border: 1px solid #4f8cc0; background: #3a5570; box-sizing: border-box; }
  .ton { background: #33506d; outline: 1px solid #4f8cc0; outline-offset: -1px; }

  .docs { flex: none; height: 21px; display: flex; padding-left: 18px; align-items: stretch; line-height: 25px; }
  .doc { width: 102px; background: #252d38; clip-path: polygon(0 100%, 5px 0, 97px 0, 100% 100%); padding-left: 9px; box-sizing: border-box; color: #8f959c; }
  .doc.cur { width: 105px; background: #29323e; clip-path: polygon(0 100%, 4px 0, 98px 0, 100% 100%); color: #c3c7cc; font-size: 10.500px; position: relative; padding-left: 9px; }
  .x { position: absolute; right: 11px; font-style: normal; font-size: 10px; color: #c3c7cc; }
  .plus { margin-left: 8px; font-size: 13px; color: #aeb4ba; }
  .strip { flex: none; height: 3px; background: #3a4552; }

  .main { flex: none; height: 698px; display: flex; background: #212830; }
  .canvas { position: relative; width: 1550px; flex: none; overflow: hidden; }
  .scene { position: absolute; left: 0; top: 0; display: block; }
  .vc { font: 15px "Noto Sans CJK SC", sans-serif; fill: #5d5f62; }
  .vd { font: 13px "Noto Sans CJK SC", sans-serif; fill: #b8bcc0; }
  .ax { font: 15px "Liberation Sans", sans-serif; }
  .vlabel { position: absolute; left: 3px; top: 4px; font-size: 10.500px; color: #c4c8cc; }
  .vwin { position: absolute; left: 1497px; top: 8px; display: flex; gap: 6px; align-items: center; }
  .wcs { position: absolute; left: 1461px; top: 161px; width: 40px; height: 14px; background: #6d7074; border-radius: 3px; display: flex; align-items: center; gap: 3px; padding-left: 4px; box-sizing: border-box; color: #a0a3a7; font-size: 9px; }
  .wcs i { width: 8px; height: 1px; background: #a0a3a7; }
  .nav { position: absolute; left: 1520px; top: 177px; width: 27px; height: 176px; background: #585c61; border-radius: 3px; }
  .nav svg { display: block; }
  .hist { position: absolute; left: 362px; top: 628px; display: flex; flex-direction: column; gap: 5px; }
  .hist span { background: #4a4e53; color: #a0a3a6; height: 12px; width: 31px; line-height: 12px; font-size: 10px; text-align: center; }
  .cmd { position: absolute; left: 312px; right: 375px; bottom: 0; height: 21px; display: flex; }
  .cmdl { width: 45px; display: flex; align-items: center; gap: 7px; background: #252c36; box-sizing: border-box; padding-left: 2px; }
  .gripv { width: 5px; height: 15px; background: repeating-linear-gradient(#aeb4ba 0 1px, transparent 1px 3px); }
  .cmdi { flex: 1; background: #bfc0bf; display: flex; align-items: center; padding-left: 4px; gap: 3px; color: #7a7a7a; font-style: italic; font-size: 11px; }
  .cmdi span { margin-left: 3px; }
  .dk { border-top-color: #3a4048; }

  .dockw { width: 50px; flex: none; background: #3a4553; display: flex; gap: 3px; padding-left: 3px; box-sizing: border-box; overflow: hidden; height: 698px; }
  .dcol { width: 20px; background: #2e3846; display: flex; flex-direction: column; align-items: center; height: fit-content; flex: none; padding-bottom: 9px; }
  .dc2 { width: 21px; }
  .grip { height: 8px; width: 11px; flex: none; background: repeating-linear-gradient(90deg, #8d96a0 0 1px, transparent 1px 3px) 0 3px / 100% 2px no-repeat; }
  .di { height: 18px; flex: none; display: flex; align-items: center; }
  .dv { height: 6px; width: 16px; flex: none; background: linear-gradient(#c9ced3, #c9ced3) center / 100% 1.500px no-repeat; }
  .dv.d3 { height: 3px; }
  .dv.d5 { height: 5px; }

  .status { flex: none; height: 24px; background: #2b333f; display: flex; align-items: flex-start; }
  .lt { display: flex; padding: 1px 0 0 10px; gap: 3px; }
  .lay { height: 15px; line-height: 15px; width: 40px; text-align: center; background: #2f3845; border-radius: 0 0 4px 4px; color: #a8adb3; font-size: 10px; }
  .lay.on { background: #3a4451; color: #f0f1f2; }
  .lay.pl { width: 14px; margin-left: 6px; font-size: 12px; }
  .sbm { display: flex; align-items: center; height: 20px; margin-left: 626px; margin-top: 2px; gap: 4px; }
  .mdl { height: 20px; width: 23px; line-height: 20px; background: #3a4350; color: #d4d7da; text-align: center; }
  .sg { display: flex; height: 20px; align-items: center; background: #353e4b; }
  .s { width: 20px; height: 20px; flex: none; display: flex; align-items: center; justify-content: center; }
  .s.on { background: #5d93c9; }
  .sg .ar { margin: 0 4px; }
  .sbr { margin-left: auto; height: 20px; margin-top: 2px; display: flex; gap: 2px; padding-right: 2px; }
  .sbr .s:last-child { margin-left: -2px; }

  .task { flex: none; height: 34px; background: #0e0f11; display: flex; align-items: stretch; }
  .tb { width: 40px; display: flex; align-items: center; justify-content: center; flex: none; box-sizing: border-box; }
  .app-ic { position: relative; margin-right: 1px; }
  .first { margin-left: 2px; }
  .app-ic::after { content: ""; position: absolute; left: 3px; right: 3px; bottom: 0; height: 2px; background: #d79a82; }
  .act { background: #474747; }
  .act::after { left: 0; right: 0; }
  .acad { width: 20px; height: 20px; background: #f2eeee; color: #b92b2b; font: bold 19px/20px "Liberation Sans", sans-serif; text-align: center; }
  .ppt { width: 20px; height: 20px; border-radius: 50%; background: #d2502b; display: flex; align-items: center; position: relative; }
  .pp { width: 11px; height: 14px; background: #b7351d; color: #fff; font: bold 10px/14px "Liberation Sans", sans-serif; text-align: center; margin-left: -3px; }
  .tray { margin-left: auto; display: flex; align-items: center; gap: 5px; color: #e4e4e4; }
  .zh { font-size: 12px; margin-left: 4px; }
  .clock { width: 62px; margin-left: 0; display: flex; flex-direction: column; align-items: center; justify-content: center; font-size: 10.500px; line-height: 16px; color: #e4e4e4; }
  .notif { width: 44px; display: flex; align-items: center; justify-content: center; padding-right: 12px; box-sizing: border-box; }

  .mark { position: absolute; left: 1172px; top: 717px; width: 340px; height: 160px; box-sizing: border-box; padding: 48px 0 0 26px; background: #1f2e5c; display: flex; gap: 19px; }
  .mlogo { display: block; flex: none; }
  .mtxt { color: #cfd0d3; margin-top: -9px; }
  .mcn { font: 700 45px/50px "Noto Sans CJK SC", sans-serif; letter-spacing: 6px; white-space: nowrap; }
  .men { font: 300 18px/20px Lato, sans-serif; letter-spacing: 2.600px; white-space: nowrap; margin-top: 5px; }
</style>
